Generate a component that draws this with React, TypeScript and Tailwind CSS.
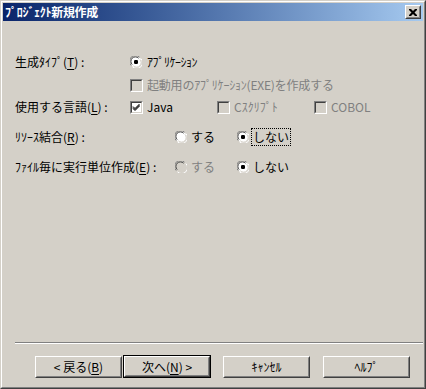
import React from 'react';

const font = { fontFamily: '"MS UI Gothic", "Noto Sans CJK JP", "DejaVu Sans", sans-serif' };

const Radio: React.FC<{ checked?: boolean; disabled?: boolean }> = ({ checked, disabled }) => (
  <svg width="12" height="12" viewBox="0 0 12 12" className="shrink-0">
    <circle cx="6" cy="6" r="5.5" fill={disabled ? '#d4d0c8' : '#ffffff'} />
    <path d="M1.2 9.5 A5.5 5.5 0 0 1 9.5 1.2" stroke="#808080" strokeWidth="1" fill="none" />
    <path d="M2.2 8.6 A4.3 4.3 0 0 1 8.6 2.2" stroke="#404040" strokeWidth="1" fill="none" />
    <path d="M10.8 2.5 A5.5 5.5 0 0 1 2.5 10.8" stroke="#ffffff" strokeWidth="1" fill="none" />
    <path d="M9.8 3.4 A4.3 4.3 0 0 1 3.4 9.8" stroke="#d4d0c8" strokeWidth="1" fill="none" />
    {checked && <rect x="4" y="4" width="4" height="4" rx="1.2" fill={disabled ? '#808080' : '#000000'} />}
  </svg>
);

const Check: React.FC<{ checked?: boolean; disabled?: boolean }> = ({ checked, disabled }) => (
  <div className="w-[13px] h-[13px] shrink-0 border border-t-[#808080] border-l-[#808080] border-b-white border-r-white">
    <div
      className={`w-full h-full border border-t-[#404040] border-l-[#404040] border-b-[#d4d0c8] border-r-[#d4d0c8] ${
        disabled ? 'bg-[#d4d0c8]' : 'bg-white'
      }`}
    >
      {checked && (
        <svg width="9" height="9" viewBox="0 0 9 9">
          <path d="M1 3.5 L3 5.5 L7.5 1 M1 4.5 L3 6.5 L7.5 2 M1 5.5 L3 7.5 L7.5 3" stroke="#000" strokeWidth="1" fill="none" />
        </svg>
      )}
    </div>
  </div>
);

const U: React.FC<{ children: React.ReactNode }> = ({ children }) => <span className="underline underline-offset-2">{children}</span>;

const Button: React.FC<{ children: React.ReactNode; isDefault?: boolean }> = ({ children, isDefault }) => {
  const inner = (
    <div className="w-full h-full border border-t-white border-l-white border-b-[#404040] border-r-[#404040]">
      <div className="w-full h-full flex items-center justify-center border border-t-[#d4d0c8] border-l-[#d4d0c8] border-b-[#808080] border-r-[#808080] text-[12px] text-black">
        {children}
      </div>
    </div>
  );
  return isDefault ? (
    <div className="w-[88px] h-[23px] border border-black">{inner}</div>
  ) : (
    <div className="w-[87px] h-[22px] mt-[1px] self-start">{inner}</div>
  );
};

export default function App() {
  return (
    <div style={font} className="w-[426px] h-[389px] bg-[#d4d0c8] text-black text-[12px] leading-none select-none">
      <div className="w-full h-full border border-t-[#d4d0c8] border-l-[#d4d0c8] border-b-[#404040] border-r-[#404040]">
        <div className="w-full h-full flex flex-col p-[1px] border border-t-white border-l-white border-b-[#808080] border-r-[#808080]">
          {/* title bar */}
          <div className="h-[18px] flex items-center justify-between pl-[2px] pr-[2px] bg-gradient-to-r from-[#0a246a] to-[#a6caf0]">
            <span className="text-white font-bold text-[12px] tracking-[-0.3px]">ﾌﾟﾛｼﾞｪｸﾄ新規作成</span>
            <div className="w-[16px] h-[14px] border border-t-white border-l-white border-b-[#404040] border-r-[#404040] bg-[#d4d0c8]">
              <div className="w-full h-full flex items-center justify-center border border-t-[#d4d0c8] border-l-[#d4d0c8] border-b-[#808080] border-r-[#808080]">
                <svg width="8" height="7" viewBox="0 0 8 7">
                  <path d="M0 0h2l2 2 2-2h2v1l-2.5 2.5L8 6v1H6L4 5 2 7H0V6l2.5-2.5L0 1z" fill="#000" />
                </svg>
              </div>
            </div>
          </div>

          {/* body */}
          <div className="flex flex-col pl-[12px] pt-[31px]">
            <div className="h-[20px] flex items-center">
              <span className="w-[115px]">生成ﾀｲﾌﾟ(<U>T</U>) :</span>
              <Radio checked />
              <span className="ml-[5px] tracking-[-0.5px]">ｱﾌﾟﾘｹｰｼｮﾝ</span>
            </div>
            <div className="h-[20px] mt-[3px] flex items-center">
              <span className="w-[115px]" />
              <Check disabled />
              <span className="ml-[4px] text-[#808080] tracking-[-0.2px]">起動用のｱﾌﾟﾘｹｰｼｮﾝ(EXE)を作成する</span>
            </div>
            <div className="h-[20px] mt-[2px] flex items-center">
              <span className="w-[115px]">使用する言語(<U>L</U>) :</span>
              <div className="w-[87px] flex items-center">
                <Check checked />
                <span className="ml-[4px]">Java</span>
              </div>
              <div className="w-[97px] flex items-center">
                <Check disabled />
                <span className="ml-[4px] text-[#808080]">Cｽｸﾘﾌﾟﾄ</span>
              </div>
              <div className="flex items-center">
                <Check disabled />
                <span className="ml-[4px] text-[#808080]">COBOL</span>
              </div>
            </div>
            <div className="h-[20px] mt-[10px] flex items-center">
              <span className="w-[160px]">ﾘｿｰｽ結合(<U>R</U>) :</span>
              <div className="w-[62px] flex items-center">
                <Radio />
                <span className="ml-[4px]">する</span>
              </div>
              <div className="flex items-center">
                <Radio checked />
                <span className="ml-[3px] px-[1px] py-[2px] outline-1 outline-dotted outline-black">しない</span>
              </div>
            </div>
            <div className="h-[20px] mt-[10px] flex items-center">
              <span className="w-[160px]">ﾌｧｲﾙ毎に実行単位作成(<U>E</U>) :</span>
              <div className="w-[62px] flex items-center">
                <Radio disabled />
                <span className="ml-[4px] text-[#808080]">する</span>
              </div>
              <div className="flex items-center">
                <Radio checked />
                <span className="ml-[4px]">しない</span>
              </div>
            </div>
          </div>

          {/* footer */}
          <div className="mt-auto flex flex-col">
            <div className="ml-[12px] h-[2px] border-t border-t-[#808080] border-b border-b-white" />
            <div className="flex pl-[32px] pt-[11px] pb-[8px]">
              <Button>&lt; 戻る(<U>B</U>)</Button>
              <div className="ml-[1px]">
                <Button isDefault>次へ(<U>N</U>) &gt;</Button>
              </div>
              <div className="ml-[12px]">
                <Button>ｷｬﾝｾﾙ</Button>
              </div>
              <div className="ml-[13px]">
                <Button>ﾍﾙﾌﾟ</Button>
              </div>
            </div>
          </div>
        </div>
      </div>
    </div>
  );
}
